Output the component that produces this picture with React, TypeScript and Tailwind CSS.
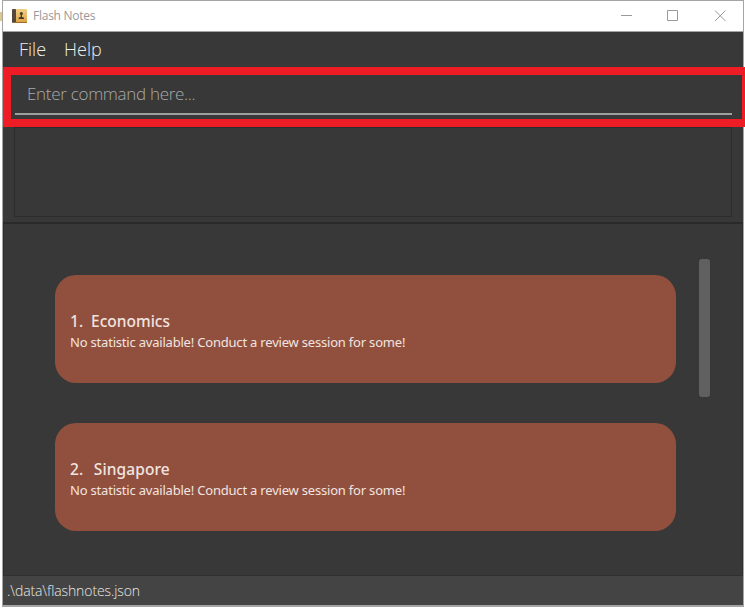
const decks = [
  { id: 1, name: 'Economics', titleClass: 'gap-[8px]' },
  { id: 2, name: 'Singapore', titleClass: 'gap-[10.5px] tracking-[0.1px]' },
];

function TitleBar() {
  return (
    <header className="flex h-[31px] shrink-0 items-center border-b border-[#a5a5a5] bg-white pl-[9px] text-[#999]">
      <svg width="15" height="15" viewBox="0 0 15 15">
        <defs>
          <linearGradient id="cover" x1="0" y1="0" x2="0" y2="1">
            <stop offset="0" stopColor="#f2cf85" />
            <stop offset="1" stopColor="#d7a044" />
          </linearGradient>
        </defs>
        <rect x="1" y="0" width="14" height="14" rx="1" fill="url(#cover)" />
        <rect x="0" y="0" width="4" height="14" rx="1" fill="#55463b" />
        <rect x="1" y="13" width="14" height="1" fill="#a46d26" />
        <circle cx="9.3" cy="4.6" r="1.5" fill="#493822" />
        <path d="M8.700 5.500h1.200v2.300l2.100.9V10H6.600V8.700l2.100-.9z" fill="#493822" />
      </svg>
      <span className="ml-[6px] text-[12px] tracking-[-0.25px]">Flash Notes</span>
      <svg className="ml-auto mr-[16px]" width="106" height="12" viewBox="0 0 106 12" fill="none" stroke="#999">
        <path d="M0 5.500h11M46.500 .5h10v10h-10zM94 .5l10.500 10.500M104.500 .5L94 11" />
      </svg>
    </header>
  );
}

function DeckCard({ id, name, titleClass }: { id: number; name: string; titleClass: string }) {
  return (
    <li className="flex h-[108px] flex-col rounded-[21px] bg-[#91503e] pl-[15px] pt-[35px] font-['Noto_Sans','Open_Sans',sans-serif] text-[#f1e4e0]">
      <h2 className={`flex h-[22px] items-center text-[15.5px] font-medium leading-[22px] ${titleClass}`}>
        <span>{id}.</span>
        <span>{name}</span>
      </h2>
      <p className="h-5 whitespace-nowrap text-[13px] leading-5 tracking-[-0.2px]">
        No statistic available! Conduct a review session for some!
      </p>
    </li>
  );
}

export default function App() {
  return (
    <div className="relative h-[608px] w-[745px] overflow-hidden bg-white pl-[2px] font-['Open_Sans','Noto_Sans',sans-serif]">
      <div className="flex h-[607px] w-[742px] flex-col border border-b-2 border-[#a5a5a5] bg-[#383838]">
        <TitleBar />
        <nav className="flex h-[35px] shrink-0 items-center gap-[18px] pl-4 text-[18px] font-light text-[#eee]">
          <span>File</span>
          <span>Help</span>
        </nav>
        <div className="ml-3 mr-[11px] flex h-[48px] shrink-0 items-center border-b-2 border-[#a09e9e] pl-3 pt-[8px] text-[17px] font-light tracking-[-0.3px] text-[#aaa]">
          Enter command here...
        </div>
        <div className="ml-[11px] mr-[11px] mt-3 h-[90px] shrink-0 border border-[#2c2c2c]" />
        <div className="mt-[5px] h-[2px] shrink-0 bg-[#2a2a2a]" />
        <main className="flex grow items-start border-x border-[#303030] pl-[51px]">
          <ul className="mt-[51px] flex w-[621px] flex-col gap-10">
            {decks.map((d) => (
              <DeckCard key={d.id} {...d} />
            ))}
          </ul>
          <div className="ml-[23px] mt-[35px] h-[138px] w-[11px] rounded-[3px] bg-[#606060]" />
        </main>
        <footer className="flex h-[30px] shrink-0 items-center border-t border-[#303030] bg-[#444] pl-1 text-[14px] font-light tracking-[-0.1px] text-[#e8e8e8]">
          .\data\flashnotes.json
        </footer>
      </div>
      <div className="absolute left-[3px] top-[67px] h-[60px] w-[742px] border-8 border-r-[3px] border-[#ee1c24]" />
      <div className="absolute left-0 top-[12px] h-[9px] w-[2px] bg-[#dec68c]" />
    </div>
  );
}
